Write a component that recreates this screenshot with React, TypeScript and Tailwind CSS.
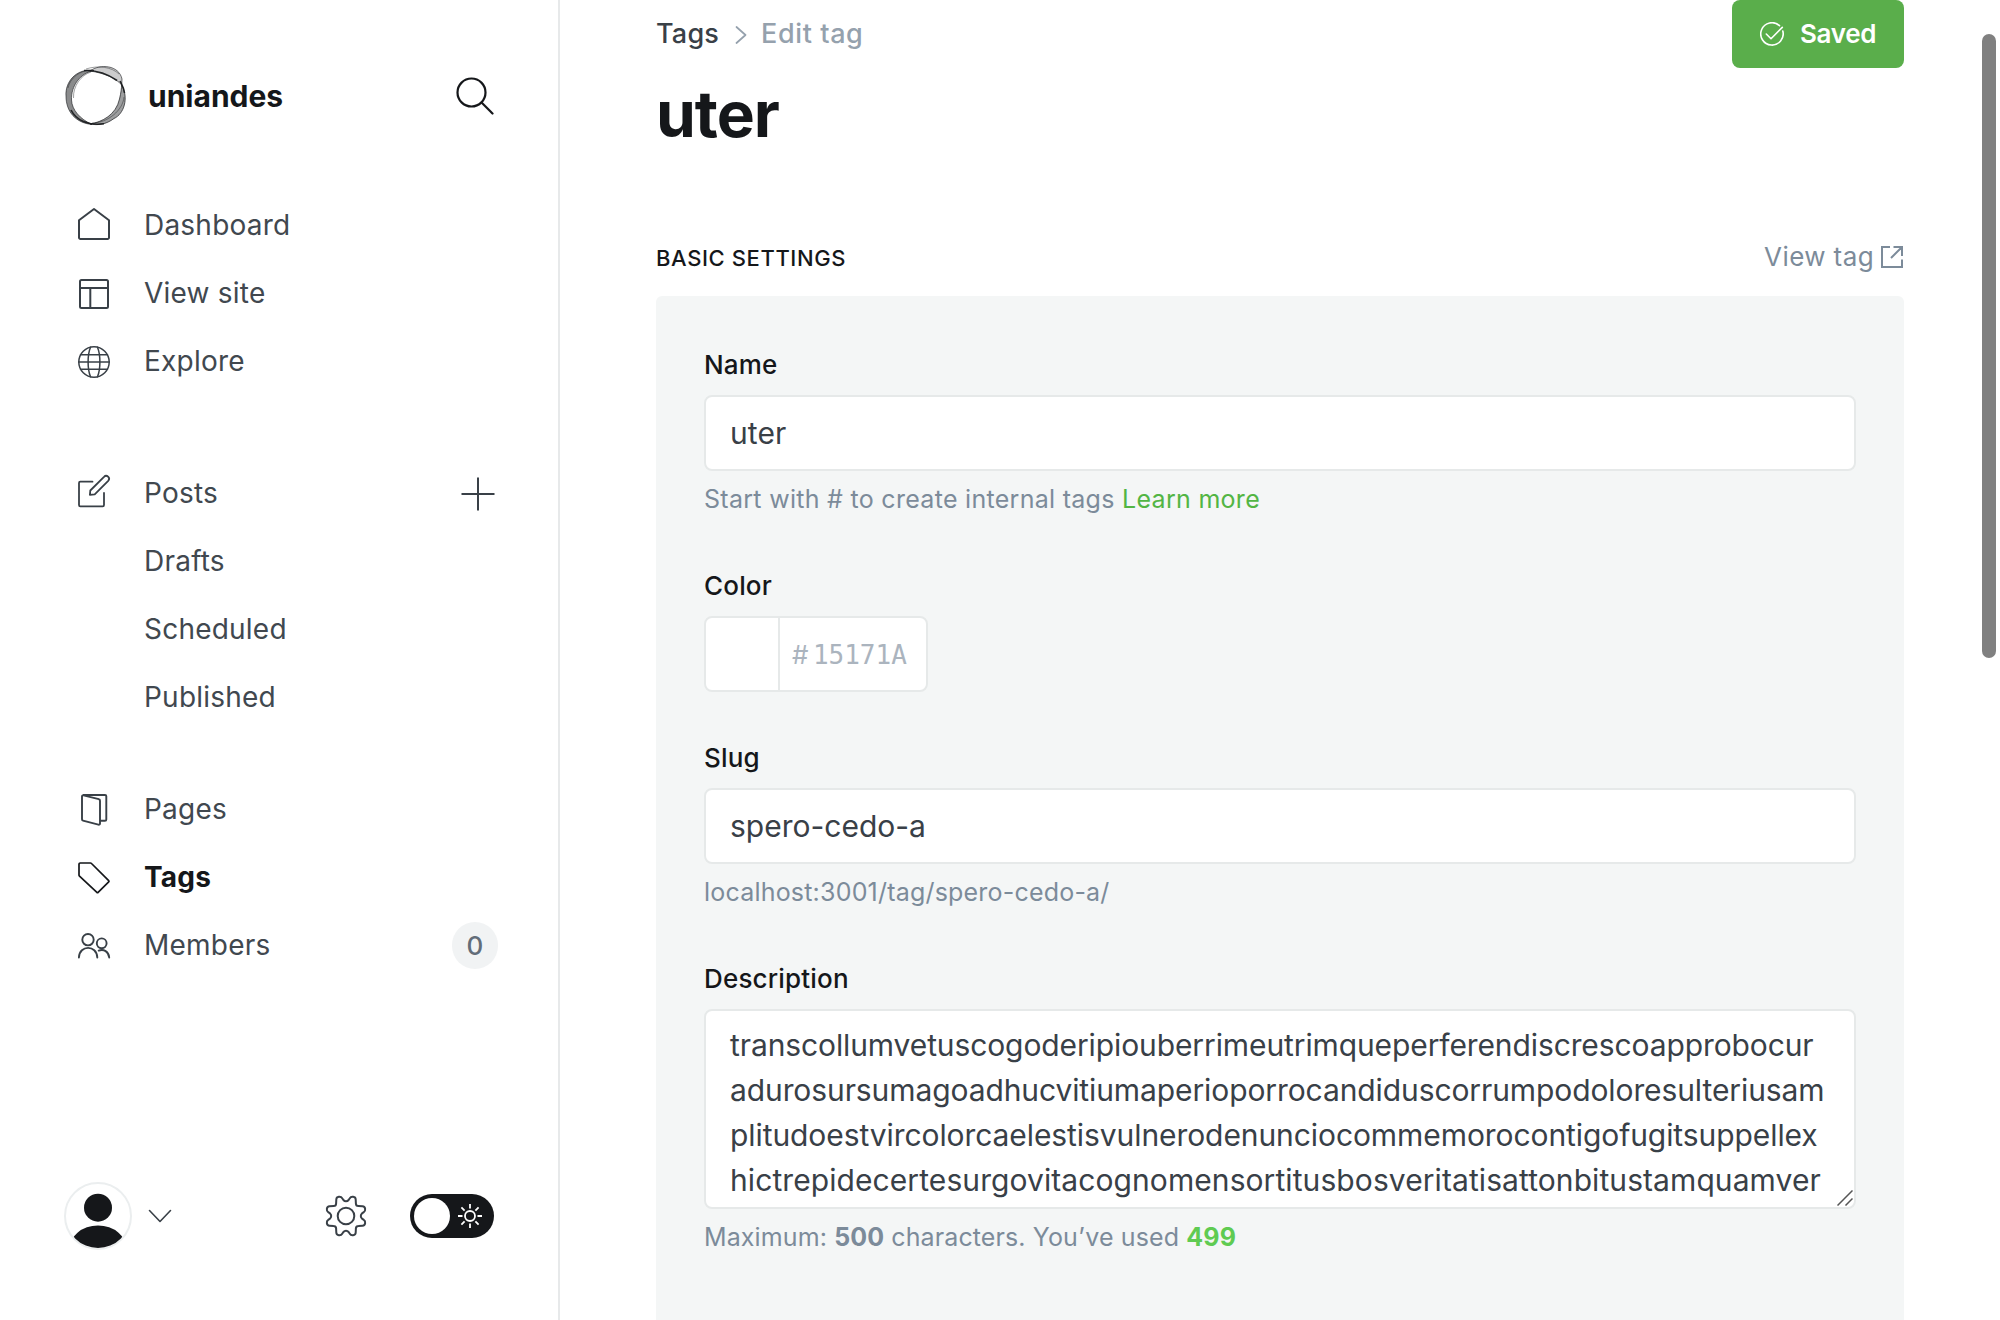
import React from "react";

function Item({ icon, label, right, bold }: { icon?: React.ReactNode; label: string; right?: React.ReactNode; bold?: boolean }) {
  return (
    <li className="flex h-[68px] items-center">
      <span className="mr-[34px] flex h-8 w-8 shrink-0 items-center justify-center">{icon}</span>
      <span className={bold ? "flex-1 font-bold text-[#15171a]" : "flex-1"}>{label}</span>
      {right}
    </li>
  );
}

function Svg({ dy = 0, w = 2, color = "#394047", children }: { dy?: number; w?: number; color?: string; children: React.ReactNode }) {
  return (
    <svg width="32" height="32" viewBox="0 0 32 32" fill="none" stroke={color} strokeWidth={w} strokeLinecap="round" strokeLinejoin="round" className="overflow-visible">
      <g transform={`translate(0 ${dy})`}>{children}</g>
    </svg>
  );
}

function Field({ label, children, hint }: { label: string; children: React.ReactNode; hint?: React.ReactNode }) {
  return (
    <div className="mb-[45px]">
      <div className="mb-[10px] h-[41px] text-[26px] leading-[41px] font-medium tracking-[0.18px] text-[#15171a]">{label}</div>
      {children}
      {hint && <p className="h-[49px] pt-[7px] text-[25px] leading-[42px] text-[#7c8b9a]">{hint}</p>}
    </div>
  );
}

// One quarter of the gear outline, from the top notch to the right notch
const gear = "M0-14.8C1.2-14.8 2-15.3 2.6-16L3.8-17.8C5-19.8 9.6-19.8 9.7-16.5L9.9-12.4C9.9-10.8 10.8-9.9 12.4-9.9L16.5-9.7C19.8-9.6 19.8-5 17.8-3.8L16-2.6C15.3-2 14.8-1.2 14.8 0";

export default function App() {
  return (
    <div className="flex h-[1320px] w-[2000px] overflow-hidden bg-white font-['Inter',sans-serif] tracking-[0.4px]">
      <aside className="flex w-[560px] shrink-0 flex-col border-r-2 border-[#e7e9ea]">
        <div className="mt-[60px] flex h-[72px] items-center pl-[64px]">
          <svg width="64" height="64" viewBox="-32 -32 64 64" fill="#15171a" stroke="#15171a" strokeWidth="1">
            <path fillOpacity=".22" strokeOpacity=".6" d="M-6-25C4-32.500 23-31 26-17L25.700-11C20-18 8-23-6-25Z" />
            <path fillOpacity=".42" strokeOpacity=".7" d="M25.700-11C33 2 28 18 18 22.500C10 28.500 2 29.500-6 28C6 26 20 19 23.500 3C25-3 25.500-8 25.700-11Z" />
            <path fillOpacity=".5" strokeOpacity=".6" d="M-2-25.500C-20-28-31-14-30 0C-30 16-20 27-4 28.500C-16 23-24 14-24.500 4C-25-10-16-23-2-25.500Z" />
            <path fill="none" strokeOpacity=".5" strokeWidth=".8" d="M-10-27C2-31 16-29 23-22M28 1C27 14 12 27-4 27M-28-8C-26-18-16-26-4-26M-22.500 2C-23-10-15-21-5-24" />
            <path fill="none" strokeWidth="1.600" strokeOpacity=".9" d="M-25 14C-20 24-8 30 8 27.800M24-15C26-11 28-8 28.500-3M-12-25.500C0-26 12-22 21-15.500" />
          </svg>
          <span className="ml-[20px] flex-1 pt-px text-[30px] font-bold tracking-normal text-[#15171a]">uniandes</span>
          <svg width="38" height="38" viewBox="0 0 38 38" fill="none" stroke="#15171a" strokeWidth="2.2" strokeLinecap="round" className="mr-[64px]">
            <circle cx="15.5" cy="15.5" r="14" />
            <path d="M25.8 25.8 36.5 36.5" />
          </svg>
        </div>
        <nav className="mt-[59px] flex-1 pr-[60px] pl-[78px] text-[28px] tracking-[0.22px] text-[#41484f]">
          <ul>
            <Item label="Dashboard" icon={<Svg dy={-1}><path d="M1 12.300 16 1l15 11.300v17.200A1.500 1.500 0 0 1 29.500 31h-27A1.500 1.500 0 0 1 1 29.500z" /></Svg>} />
            <Item label="View site" icon={<Svg dy={1}><rect x="2" y="2" width="28" height="28" rx="1.500" /><path d="M2 10h28M12.300 10v20" /></Svg>} />
            <Item label="Explore" icon={<Svg dy={1} w={1.5}><circle cx="16" cy="16" r="15.200" /><path d="M12.500 1.200C9.300 9 9.300 23 12.500 30.800M19.500 1.200C22.700 9 22.700 23 19.500 30.800M2.500 8.700h27M.7 16h30.600M2.500 23.300h27" /></Svg>} />
          </ul>
          <ul className="mt-[64px]">
            <Item label="Posts" icon={<Svg dy={-2} w={1.8}><path d="M14.500 6.700H2.300A1.300 1.300 0 0 0 1 8v22a1.300 1.300 0 0 0 1.300 1.300h22.400A1.300 1.300 0 0 0 26 30V18M11.900 19.800l.4-4.300L26 1.800a2.700 2.700 0 0 1 4.200 4L16.700 19.300z" /></Svg>}
              right={<svg width="34" height="34" viewBox="0 0 34 34" stroke="#394047" strokeWidth="2" className="mt-[2px] mr-[3px]"><path d="M17 .5v33M.5 17h33" /></svg>} />
            <Item label="Drafts" />
            <Item label="Scheduled" />
            <Item label="Published" />
          </ul>
          <ul className="mt-[44px]">
            <Item label="Pages" icon={<Svg dy={1} w={1.9}><path d="M22 26.800h5a1.300 1.300 0 0 0 1.300-1.300V2.300A1.300 1.300 0 0 0 27 1H5.300M5.500 1.300 20.800 5.200a1.500 1.500 0 0 1 1.200 1.500v22.800a1.200 1.200 0 0 1-1.600 1.200L5 26.600a1.300 1.300 0 0 1-1-1.300V2.500a1.200 1.200 0 0 1 1.500-1.200z" /></Svg>} />
            <Item label="Tags" bold icon={<Svg dy={1} w={1.7} color="#15171a"><path d="M2.200 1h10.200a1.500 1.500 0 0 1 1.100.5L30.700 18.600a.8.8 0 0 1 0 1.200L20.100 30.400a.8.8 0 0 1-1.200 0L1.500 14.200a1.500 1.500 0 0 1-.5-1.100V2.200A1.200 1.200 0 0 1 2.200 1z" /></Svg>} />
            <Item label="Members" icon={<Svg dy={1} w={1.9}><circle cx="10" cy="9.700" r="5.700" /><path d="M.9 27.500C1.500 14.700 18.700 14.700 19.300 27.500M20.700 20.600c5-2 10 1 10.500 6.900" /><circle cx="23.700" cy="13.300" r="4.900" /></Svg>}
              right={<span className="flex h-[47px] w-[46px] items-center justify-center rounded-full bg-[#f1f3f4] text-[26px] font-medium text-[#626d79]">0</span>} />
          </ul>
        </nav>
        <div className="mb-[70px] flex h-[68px] items-center pl-[64px]">
          <svg width="68" height="68" viewBox="0 0 68 68">
            <clipPath id="av"><circle cx="34" cy="34" r="32" /></clipPath>
            <circle cx="34" cy="34" r="33" fill="#fff" stroke="#ebeeef" strokeWidth="2" />
            <g clipPath="url(#av)" fill="#15171a"><circle cx="34" cy="25.700" r="14" /><ellipse cx="34" cy="68" rx="29" ry="24.500" /></g>
          </svg>
          <svg width="24" height="14" viewBox="0 0 24 14" fill="none" stroke="#394047" strokeWidth="1.600" strokeLinecap="round" strokeLinejoin="round" className="ml-[16px]"><path d="M1.500 1.500 12 12.500 22.500 1.500" /></svg>
          <svg width="42" height="42" viewBox="-21 -21 42 42" fill="none" stroke="#394047" strokeWidth="2" className="ml-[153px]">
            <path d={gear} /><path d={gear} transform="rotate(90)" /><path d={gear} transform="rotate(180)" /><path d={gear} transform="rotate(270)" />
            <circle r="8.300" />
          </svg>
          <div className="ml-[43px] flex h-[44px] w-[84px] items-center rounded-full bg-[#15171a] pl-1">
            <span className="h-9 w-9 rounded-full bg-white" />
            <svg width="26" height="26" viewBox="-13 -13 26 26" fill="none" stroke="#fff" strokeWidth="1.800" className="ml-[7px]">
              <circle r="5" /><path d="M0-12V-7.500M0 12V7.500M-12 0H-7.500M12 0H7.500M-8.600-8.600-5.400-5.400M8.600 8.600 5.400 5.400M-8.600 8.600-5.400 5.400M8.600-8.600 5.400-5.400" />
            </svg>
          </div>
        </div>
      </aside>
      <main className="relative w-[1440px] shrink-0 px-[96px]">
        <header className="flex h-[220px] items-start justify-between">
          <div>
            <div className="flex h-[67px] items-center pt-[2px] text-[27px] font-medium tracking-[0.6px]">
              <span className="tracking-[0.2px] text-[#394047]">Tags</span>
              <svg width="12" height="18" viewBox="0 0 12 18" fill="none" stroke="#95a1ad" strokeWidth="1.700" strokeLinecap="round" strokeLinejoin="round" className="mt-px mr-[14px] ml-[16px]"><path d="M1.500 1 10.500 9 1.500 17" /></svg>
              <span className="text-[#95a1ad]">Edit tag</span>
            </div>
            <h1 className="text-[64px] leading-[94px] font-bold tracking-[-1px] text-[#15171a]">uter</h1>
          </div>
          <button className="flex h-[68px] w-[172px] items-center rounded-[8px] bg-[#5aae4b] pl-[28px] text-[26px] font-semibold tracking-[-0.3px] text-white">
            <svg width="24" height="24" viewBox="0 0 24 24" fill="none" stroke="#fff" strokeWidth="1.600" strokeLinecap="round" strokeLinejoin="round" className="mr-[16px]"><path d="M19.500 3.600A11.200 11.200 0 1 0 22.800 9M6.300 12 11 16.700 22.300 5.400" /></svg>
            <span className="pb-px">Saved</span>
          </button>
        </header>
        <div className="flex h-[76px] items-center justify-between">
          <h4 className="text-[22px] font-medium tracking-[0.6px] text-[#15171a]">BASIC SETTINGS</h4>
          <a className="flex items-center pb-[3px] text-[26px] text-[#7c8b9a]">
            View tag
            <svg width="24" height="24" viewBox="-1 -1 24 24" fill="none" stroke="#7c8b9a" strokeWidth="2" className="ml-[6px]"><path d="M9 1H1v20h20v-7.500M12.500 1H21v9M10 12 21 1" /></svg>
          </a>
        </div>
        <section className="h-[1100px] rounded-[6px] bg-[#f4f6f6] px-[48px] pt-[48px]">
          <Field label="Name" hint={<span className="tracking-[0.29px]">Start with # to create internal tags <a className="text-[#52b544]">Learn more</a></span>}>
            <div className="flex h-[76px] items-center rounded-[8px] border-2 border-[#e6e9e9] bg-white px-6 pt-px text-[30px] tracking-[0.1px] text-[#394047]">uter</div>
          </Field>
          <Field label="Color">
            <div className="flex h-[76px] w-[224px] items-center rounded-[8px] border-2 border-[#e6e9e9] bg-white text-[26px] text-[#abb4be]">
              <span className="h-full w-[74px] border-r-2 border-[#e6e9e9]" />
              <span className="mt-px ml-[12px]">#</span>
              <span className="mt-[3px] ml-[4px] font-['DejaVu_Sans_Mono',monospace] tracking-normal">15171A</span>
            </div>
          </Field>
          <Field label="Slug" hint={<span className="tracking-[0.2px]">localhost:3001/tag/spero-cedo-a/</span>}>
            <div className="flex h-[76px] items-center rounded-[8px] border-2 border-[#e6e9e9] bg-white px-6 pt-px text-[30px] tracking-normal text-[#394047]">spero-cedo-a</div>
          </Field>
          <Field label="Description" hint={<span className="tracking-[0.11px]">Maximum: <b>500</b> characters. You’ve used <b className="text-[#5fcb52]">499</b></span>}>
            <div className="relative h-[200px] rounded-[8px] border-2 border-[#e6e9e9] bg-white px-6 pt-[12px] text-[30px] leading-[45px] text-[#394047]">
              <div className="tracking-[-0.106px]">transcollumvetuscogoderipiouberrimeutrimqueperferendiscrescoapprobocur</div>
              <div className="tracking-[-0.097px]">adurosursumagoadhucvitiumaperioporrocandiduscorrumpodoloresulteriusam</div>
              <div className="tracking-[-0.079px]">plitudoestvircolorcaelestisvulnerodenunciocommemorocontigofugitsuppellex</div>
              <div className="tracking-[0.083px]">hictrepidecertesurgovitacognomensortitusbosveritatisattonbitustamquamver</div>
              <svg width="16" height="16" viewBox="0 0 16 16" stroke="#555" strokeWidth="1.500" className="absolute right-px bottom-[1px]"><path d="M.5 15.500 15.500.5M8.500 15.500 15.500 8.500" /></svg>
            </div>
          </Field>
        </section>
        <span className="absolute top-[34px] right-[4px] h-[624px] w-[14px] rounded-full bg-[#808080]" />
      </main>
    </div>
  );
}
